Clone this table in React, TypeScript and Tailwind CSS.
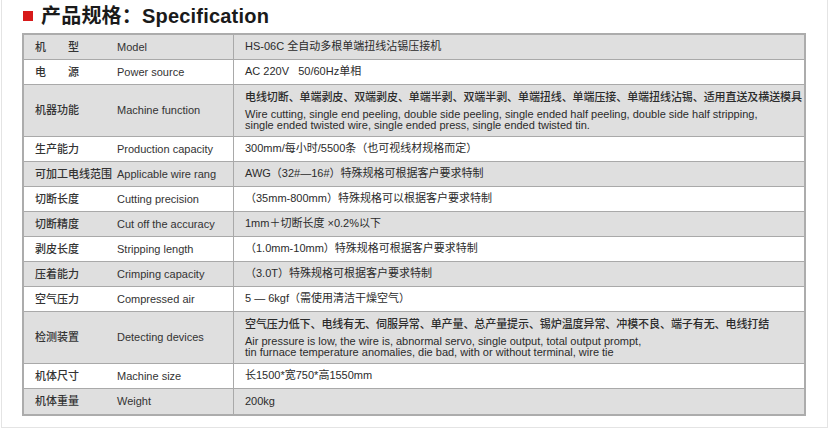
type SpecRow = {
  cn: string;
  en: string;
  value?: string;
  cnLine?: string;
  enLines?: string[];
};

const rows: SpecRow[] = [
  { cn: "机　　型", en: "Model", value: "HS-06C 全自动多根单端扭线沾锡压接机" },
  { cn: "电　　源", en: "Power source", value: "AC 220V   50/60Hz单相" },
  {
    cn: "机器功能",
    en: "Machine function",
    cnLine:
      "电线切断、单端剥皮、双端剥皮、单端半剥、双端半剥、单端扭线、单端压接、单端扭线沾锡、适用直送及横送模具",
    enLines: [
      "Wire cutting, single end peeling, double side peeling, single ended half peeling, double side half stripping,",
      "single ended twisted wire, single ended press, single ended twisted tin.",
    ],
  },
  { cn: "生产能力", en: "Production capacity", value: "300mm/每小时/5500条（也可视线材规格而定）" },
  { cn: "可加工电线范围", en: "Applicable wire rang", value: "AWG（32#—16#）特殊规格可根据客户要求特制" },
  { cn: "切断长度", en: "Cutting precision", value: "（35mm-800mm）特殊规格可以根据客户要求特制" },
  { cn: "切断精度", en: "Cut off the accuracy", value: "1mm＋切断长度 ×0.2%以下" },
  { cn: "剥皮长度", en: "Stripping length", value: "（1.0mm-10mm）特殊规格可根据客户要求特制" },
  { cn: "压着能力", en: "Crimping capacity", value: "（3.0T）特殊规格可根据客户要求特制" },
  { cn: "空气压力", en: "Compressed air", value: "5 — 6kgf（需使用清洁干燥空气）" },
  {
    cn: "检测装置",
    en: "Detecting devices",
    cnLine:
      "空气压力低下、电线有无、伺服异常、单产量、总产量提示、锡炉温度异常、冲模不良、端子有无、电线打结",
    enLines: [
      "Air pressure is low, the wire is, abnormal servo, single output, total output prompt,",
      "tin furnace temperature anomalies, die bad, with or without terminal, wire tie",
    ],
  },
  { cn: "机体尺寸", en: "Machine size", value: "长1500*宽750*高1550mm" },
  { cn: "机体重量", en: "Weight", value: "200kg" },
];

const Row = ({ row, index, last }: { row: SpecRow; index: number; last: boolean }) => {
  const tall = !!row.cnLine;
  const gray = index % 2 === 0;
  return (
    <div
      className={`flex ${tall ? "h-[52px]" : "h-[25px]"} ${gray ? "bg-[#dfdfdf]" : "bg-white"} ${
        last ? "" : "border-b border-[#a9a9a9]"
      }`}
    >
      <div className="flex w-[93px] shrink-0 items-center pl-[11px] font-medium text-[#333]">
        {row.cn}
      </div>
      <div className="flex w-[117px] shrink-0 items-center border-r border-[#a9a9a9] text-[#333]">
        {row.en}
      </div>
      <div className="flex min-w-0 flex-1 flex-col justify-center pb-[1px] pl-[11px] text-[#2b2b2b]">
        {tall ? (
          <>
            <div className="whitespace-nowrap font-medium leading-[14px] tracking-[-0.08px]">
              {row.cnLine}
            </div>
            <div className="mt-[5px] leading-[10.5px]">
              {row.enLines?.map((line) => (
                <div key={line} className="whitespace-nowrap">
                  {line}
                </div>
              ))}
            </div>
          </>
        ) : (
          <div className="whitespace-pre">{row.value}</div>
        )}
      </div>
    </div>
  );
};

export default function App() {
  return (
    <div className="h-[430px] w-[830px] overflow-hidden bg-white font-['Liberation_Sans','Noto_Sans_CJK_SC',sans-serif]">
      <div className="ml-[1px] h-[428px] w-[827px] border-x border-b border-[#e4e4e4]">
        <div className="flex h-[33px] items-center pl-[21px] pb-[2px]">
          <span className="h-[10px] w-[10px] bg-[#d71a1a]" />
          <h1 className="ml-[8px] text-[20px] font-bold leading-none tracking-[0.2px] text-[#1a1a1a]">
            产品规格：Specification
          </h1>
        </div>
        <div className="ml-[20px] w-[784px] border-2 border-[#acacac] text-[11px] leading-none">
          {rows.map((row, i) => (
            <Row key={row.en} row={row} index={i} last={i === rows.length - 1} />
          ))}
        </div>
      </div>
    </div>
  );
}
